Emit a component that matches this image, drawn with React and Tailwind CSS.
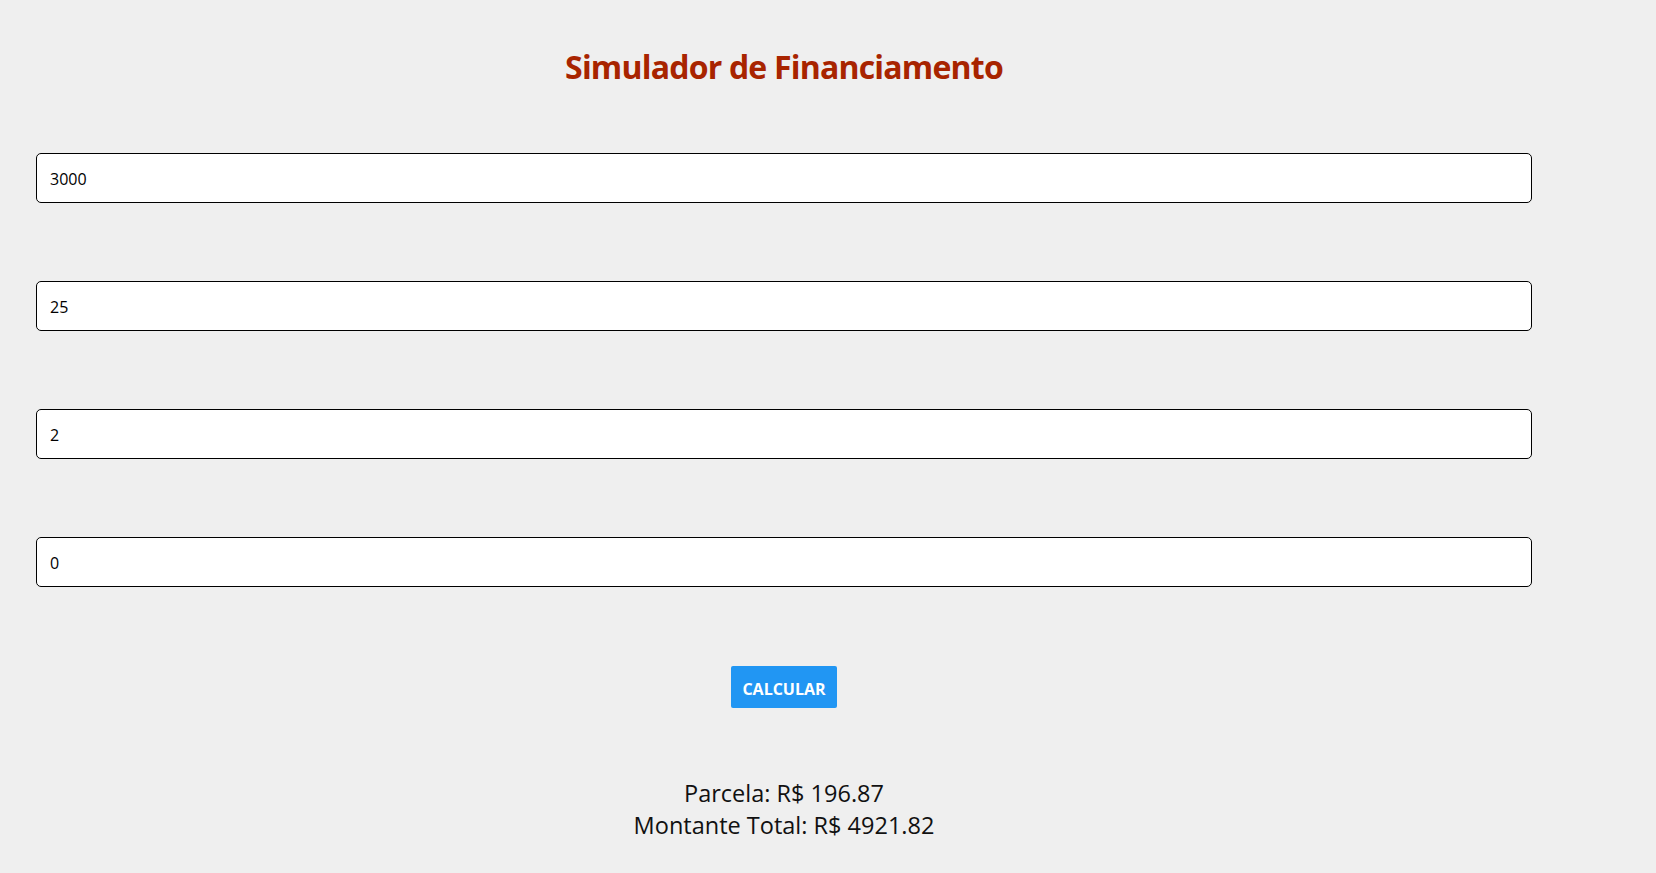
const fields = ["3000", "25", "2", "0"];

export default function App() {
  return (
    <div className="min-h-[873px] w-full bg-[#efefef] font-['Open_Sans',sans-serif] text-black">
      <div className="w-[1568px] px-[36px] pt-[44px]">
        <h1 className="text-center text-[32px] leading-[46px] font-bold text-[#a82400] tracking-[-0.8px]">
          Simulador de Financiamento
        </h1>

        <div className="mt-[63px] flex flex-col gap-[78px]">
          {fields.map((v, i) => (
            <input
              key={i}
              type="text"
              defaultValue={v}
              className="h-[50px] w-full rounded-[5px] border border-black bg-white px-[13px] pt-[1px] text-[16px] text-black outline-none"
            />
          ))}
        </div>

        <div className="mt-[79px] flex justify-center">
          <button className="h-[42px] w-[106px] rounded-[2px] bg-[#2196f3] pt-[3px] text-[16px] font-bold text-white">
            CALCULAR
          </button>
        </div>

        <div className="mt-[69px] text-center text-[23.5px] leading-[32px] text-[#111]">
          <p>Parcela: R$ 196.87</p>
          <p>Montante Total: R$ 4921.82</p>
        </div>
      </div>
    </div>
  );
}
